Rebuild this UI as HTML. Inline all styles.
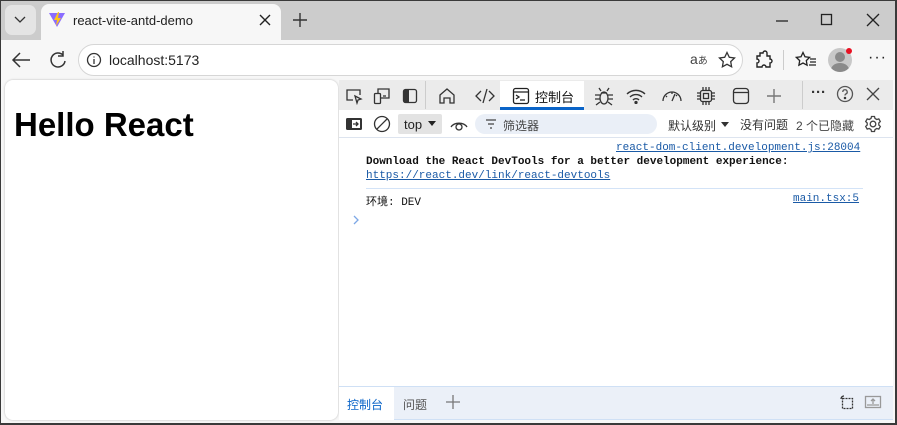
<!DOCTYPE html>
<html><head><meta charset="utf-8"><style>
*{margin:0;padding:0;box-sizing:border-box}
body{width:897px;height:425px;overflow:hidden;background:#3a3a3a;font-family:"Liberation Sans","Noto Sans CJK SC",sans-serif;position:relative}
.a{position:absolute}
svg{position:absolute;fill:none;stroke:#333;stroke-width:1.3}
.mono{font-family:"Liberation Mono","Noto Sans CJK SC",monospace;font-size:11px}
</style></head><body>
<div class="a" style="left:1px;top:1px;width:894px;height:422px;background:#cccccc"></div>
<div class="a" style="left:5px;top:5px;width:31px;height:30px;background:#e4e4e4;border-radius:7px"></div>
<svg style="left:13px;top:14px" width="14" height="10"><path d="M2 3l5 5 5-5" stroke="#333"/></svg>
<div class="a" style="left:41px;top:4px;width:240px;height:40px;background:#f7f7f7;border-radius:8px 8px 0 0"></div>
<svg style="left:48px;top:12px" width="18" height="16"><path d="M1 1L9 15 17 1Z" fill="#8a6cff" stroke="none"/><path d="M10 0L6 8h3l-1 6 5-8h-3l1-6z" fill="#ffc517" stroke="none"/></svg>
<div class="a" style="left:73px;top:13px;font-size:13px;color:#222">react-vite-antd-demo</div>
<svg style="left:259px;top:14px" width="12" height="12"><path d="M1 1l10 10M11 1L1 11" stroke="#222" stroke-width="1.4"/></svg>
<svg style="left:292px;top:12px" width="16" height="16"><path d="M8 1v14M1 8h14" stroke="#333" stroke-width="1.4"/></svg>
<svg style="left:775px;top:14px" width="14" height="14"><path d="M1 7h12" stroke="#222"/></svg>
<svg style="left:820px;top:13px" width="14" height="14"><rect x="1.5" y="1.5" width="10" height="10" stroke="#222"/></svg>
<svg style="left:866px;top:13px" width="14" height="14"><path d="M1 1l12 12M13 1L1 13" stroke="#222"/></svg>
<div class="a" style="left:1px;top:40px;width:894px;height:383px;background:#f7f7f7"></div>
<svg style="left:11px;top:51px" width="20" height="18"><path d="M19 9H2M9 2L2 9l7 7" stroke="#333" stroke-width="1.5"/></svg>
<svg style="left:48px;top:50px" width="20" height="20"><path d="M15 5A7 7 0 1 0 17 11" stroke="#333" stroke-width="1.5"/><path d="M15 1v5h-5" stroke="#333" stroke-width="1.5"/></svg>
<div class="a" style="left:78px;top:44px;width:665px;height:32px;background:#fff;border:1px solid #d6d6d6;border-radius:16px"></div>
<svg style="left:86px;top:52px" width="16" height="16"><circle cx="8" cy="8" r="6.5" stroke="#333"/><path d="M8 7v5M8 4.5v1" stroke="#333"/></svg>
<div class="a" style="left:109px;top:52px;font-size:14px;color:#222">localhost:5173</div>
<div class="a" style="left:690px;top:51px;font-size:14px;color:#444">a<span style="font-size:10px">あ</span></div>
<svg style="left:718px;top:51px" width="18" height="18"><path d="M9 1.5l2.3 4.8 5.2.7-3.8 3.6.9 5.2L9 13.3l-4.6 2.5.9-5.2L1.5 7l5.2-.7z" stroke="#333"/></svg>
<svg style="left:753px;top:50px" width="20" height="20"><path d="M7 3h3a2 2 0 0 1 4 0v3h3v3a2 2 0 0 1 0 4v4h-4a2 2 0 0 0-4 0H4v-4a2 2 0 0 0 0-4V6h3z" stroke="#222" stroke-width="1.4"/></svg>
<div class="a" style="left:783px;top:50px;width:1px;height:20px;background:#ccc"></div>
<svg style="left:795px;top:51px" width="22" height="18"><path d="M8 1.5l2 4.3 4.6.6-3.3 3.2.8 4.6L8 12l-4.1 2.2.8-4.6L1.4 6.4 6 5.8z" stroke="#222"/><path d="M15 8h6M15 11h6M14 14h7" stroke="#222"/></svg>
<div class="a" style="left:828px;top:48px;width:24px;height:24px;border-radius:50%;background:#c8c8c8;overflow:hidden"><div class="a" style="left:7px;top:4px;width:10px;height:10px;border-radius:50%;background:#8a8a8a"></div><div class="a" style="left:3px;top:15px;width:18px;height:14px;border-radius:50%;background:#8a8a8a"></div></div>
<div class="a" style="left:846px;top:48px;width:6px;height:6px;border-radius:50%;background:#e81123"></div>
<div class="a" style="left:868px;top:49px;font-size:16px;color:#222;letter-spacing:1px">···</div>
<div class="a" style="left:5px;top:80px;width:333px;height:340px;background:#fff;border-radius:8px;box-shadow:0 0 2px rgba(0,0,0,.25)"></div>
<div class="a" style="left:14px;top:106px;font-size:33px;font-weight:bold;color:#000;letter-spacing:0px">Hello React</div>
<div class="a" style="left:339px;top:80px;width:554px;height:340px;background:#fff"></div>
<div class="a" style="left:339px;top:80px;width:554px;height:30px;background:#ebebeb"></div>
<div class="a" style="left:500px;top:81px;width:84px;height:29px;background:#fff"></div>
<div class="a" style="left:500px;top:107px;width:84px;height:3px;background:#0a64c8"></div>
<svg style="left:345px;top:87px" width="18" height="18"><path d="M8 13H2V3h13v5" stroke="#333"/><path d="M10 9l6 3-3 1-1 3z" stroke="#333"/></svg>
<svg style="left:373px;top:87px" width="18" height="18"><rect x="1.5" y="6.5" width="6" height="10" rx="1" stroke="#333"/><path d="M5 6V2h11v9H8" stroke="#333"/><path d="M10 9h3" stroke="#333"/></svg>
<svg style="left:402px;top:88px" width="16" height="16"><rect x="1.5" y="1.5" width="13" height="13" rx="2" stroke="#333"/><rect x="2" y="2" width="5" height="12" fill="#333" stroke="none"/></svg>
<div class="a" style="left:425px;top:81px;width:1px;height:28px;background:#ccc"></div>
<svg style="left:438px;top:87px" width="18" height="18"><path d="M2 8L9 2l7 6v8h-4v-5H6v5H2z" stroke="#333"/></svg>
<svg style="left:475px;top:88px" width="20" height="16"><path d="M6 3L1 8l5 5M14 3l5 5-5 5M12 1L8 15" stroke="#333"/></svg>
<svg style="left:512px;top:87px" width="18" height="18"><rect x="1.5" y="1.5" width="15" height="15" rx="2" stroke="#222"/><path d="M2 5h14M4 8l3 2-3 2M8 13h5" stroke="#222"/></svg>
<div class="a" style="left:535px;top:87px;font-size:13px;color:#111">控制台</div>
<svg style="left:594px;top:86px" width="20" height="20"><ellipse cx="10" cy="12" rx="4" ry="6" stroke="#333"/><path d="M7 5l-2-3M13 5l2-3M6 9H1M6 13H1M6 16l-4 3M14 9h5M14 13h5M14 16l4 3M7 7h6" stroke="#333"/></svg>
<svg style="left:626px;top:88px" width="20" height="16"><path d="M1 6a13 13 0 0 1 18 0M4 9a8.5 8.5 0 0 1 12 0M7 12a4 4 0 0 1 6 0" stroke="#333" stroke-width="1.4"/><circle cx="10" cy="14.5" r="1" fill="#333"/></svg>
<svg style="left:661px;top:88px" width="22" height="16"><path d="M2 13a9 9 0 0 1 18 0" stroke="#333"/><path d="M11 13l3-7" stroke="#333"/><path d="M5 8l1 1M11 4v2M16 7l-1 1" stroke="#333"/></svg>
<svg style="left:696px;top:86px" width="20" height="20"><rect x="4.5" y="4.5" width="11" height="11" rx="2" stroke="#333"/><rect x="7.5" y="7.5" width="5" height="5" stroke="#333"/><path d="M7 1v3M10 1v3M13 1v3M7 16v3M10 16v3M13 16v3M1 7h3M1 10h3M1 13h3M16 7h3M16 10h3M16 13h3" stroke="#333"/></svg>
<svg style="left:732px;top:87px" width="18" height="18"><rect x="1.5" y="1.5" width="15" height="15" rx="3" stroke="#333"/><path d="M2 5.5h14" stroke="#333"/></svg>
<svg style="left:766px;top:88px" width="16" height="16"><path d="M8 1v14M1 8h14" stroke="#777" stroke-width="1.4"/></svg>
<div class="a" style="left:802px;top:81px;width:1px;height:28px;background:#ccc"></div>
<div class="a" style="left:811px;top:84px;font-size:15px;color:#333;font-weight:bold">···</div>
<svg style="left:836px;top:85px" width="18" height="18"><circle cx="9" cy="9" r="7.5" stroke="#555"/><path d="M6.8 7a2.2 2.2 0 1 1 3 2c-.7.3-.8.8-.8 1.5" stroke="#555"/><circle cx="9" cy="13" r=".6" fill="#555"/></svg>
<svg style="left:866px;top:87px" width="14" height="14"><path d="M1 1l12 12M13 1L1 13" stroke="#444"/></svg>
<div class="a" style="left:339px;top:137px;width:554px;height:1px;background:#dde4ef"></div>
<svg style="left:345px;top:116px" width="18" height="16"><rect x="1" y="2" width="16" height="12" rx="1.5" fill="#333" stroke="none"/><rect x="7" y="4" width="8" height="8" fill="#fff" stroke="none"/><path d="M8 8h5M11 6l2 2-2 2" stroke="#333"/></svg>
<svg style="left:373px;top:115px" width="18" height="18"><circle cx="9" cy="9" r="7.5" stroke="#333"/><path d="M3.5 14.5l11-11" stroke="#333"/></svg>
<div class="a" style="left:398px;top:114px;width:44px;height:20px;background:#e3e3e3;border-radius:2px"></div>
<div class="a" style="left:404px;top:117px;font-size:13px;color:#222">top</div>
<div class="a" style="left:428px;top:121px;width:0;height:0;border-left:4px solid transparent;border-right:4px solid transparent;border-top:5px solid #222"></div>
<svg style="left:450px;top:117px" width="18" height="14"><path d="M1 10a9 7 0 0 1 16 0" stroke="#333"/><circle cx="9" cy="10" r="3" stroke="#333"/></svg>
<div class="a" style="left:475px;top:114px;width:182px;height:20px;background:#eaeff7;border-radius:10px"></div>
<svg style="left:485px;top:119px" width="12" height="10"><path d="M1 1h10M3 5h6M5 9h2" stroke="#444"/></svg>
<div class="a" style="left:503px;top:117px;font-size:12px;color:#444">筛选器</div>
<div class="a" style="left:668px;top:117px;font-size:12px;color:#333">默认级别</div>
<div class="a" style="left:721px;top:122px;width:0;height:0;border-left:4px solid transparent;border-right:4px solid transparent;border-top:5px solid #333"></div>
<div class="a" style="left:740px;top:116px;font-size:12px;color:#333">没有问题</div>
<div class="a" style="left:796px;top:117px;font-size:12px;color:#444">2 个已隐藏</div>
<svg style="left:864px;top:115px" width="18" height="18"><circle cx="9" cy="9" r="2.8" stroke="#444"/><path d="M7.5 1.5h3l.5 2 1.8 1 2-.6 1.5 2.6-1.5 1.5v2l1.5 1.5-1.5 2.6-2-.6-1.8 1-.5 2h-3l-.5-2-1.8-1-2 .6-1.5-2.6 1.5-1.5v-2L1.7 6.5 3.2 3.9l2 .6 1.8-1z" stroke="#444"/></svg>
<div class="a mono" style="left:616px;top:142px;color:#1a5aa6;text-decoration:underline">react-dom-client.development.js:28004</div>
<div class="a mono" style="left:366px;top:156px;color:#111;font-weight:bold">Download the React DevTools for a better development experience:</div>
<div class="a mono" style="left:366px;top:170px;color:#1a5aa6;text-decoration:underline">https://react.dev/link/react-devtools</div>
<div class="a" style="left:366px;top:188px;width:497px;height:1px;background:#d3e3f7"></div>
<div class="a mono" style="left:366px;top:193px;color:#111">环境: DEV</div>
<div class="a mono" style="left:793px;top:193px;color:#1a5aa6;text-decoration:underline">main.tsx:5</div>
<svg style="left:352px;top:215px" width="8" height="10"><path d="M2 1l4 4-4 4" stroke="#7da8e6"/></svg>
<div class="a" style="left:339px;top:386px;width:554px;height:34px;background:#ebf0f8;border-top:1px solid #cfe0f5;border-bottom:1px solid #cfe0f5"></div>
<div class="a" style="left:339px;top:387px;width:55px;height:33px;background:#fff"></div>
<div class="a" style="left:347px;top:396px;font-size:12px;color:#0a64c8">控制台</div>
<div class="a" style="left:403px;top:396px;font-size:12px;color:#555">问题</div>
<svg style="left:446px;top:395px" width="14" height="14"><path d="M7 0v14M0 7h14" stroke="#777" stroke-width="1.3"/></svg>
<svg style="left:837px;top:394px" width="18" height="16"><rect x="5.5" y="4.5" width="10" height="10" stroke="#333" stroke-dasharray="2 1"/><path d="M4 5a3 3 0 0 1 3-3" stroke="#333"/></svg>
<svg style="left:864px;top:395px" width="18" height="14"><rect x="1.5" y="1.5" width="15" height="11" stroke="#999"/><path d="M9 4v5M7 6l2-2 2 2M3 10h12" stroke="#999"/></svg>
</body></html>
